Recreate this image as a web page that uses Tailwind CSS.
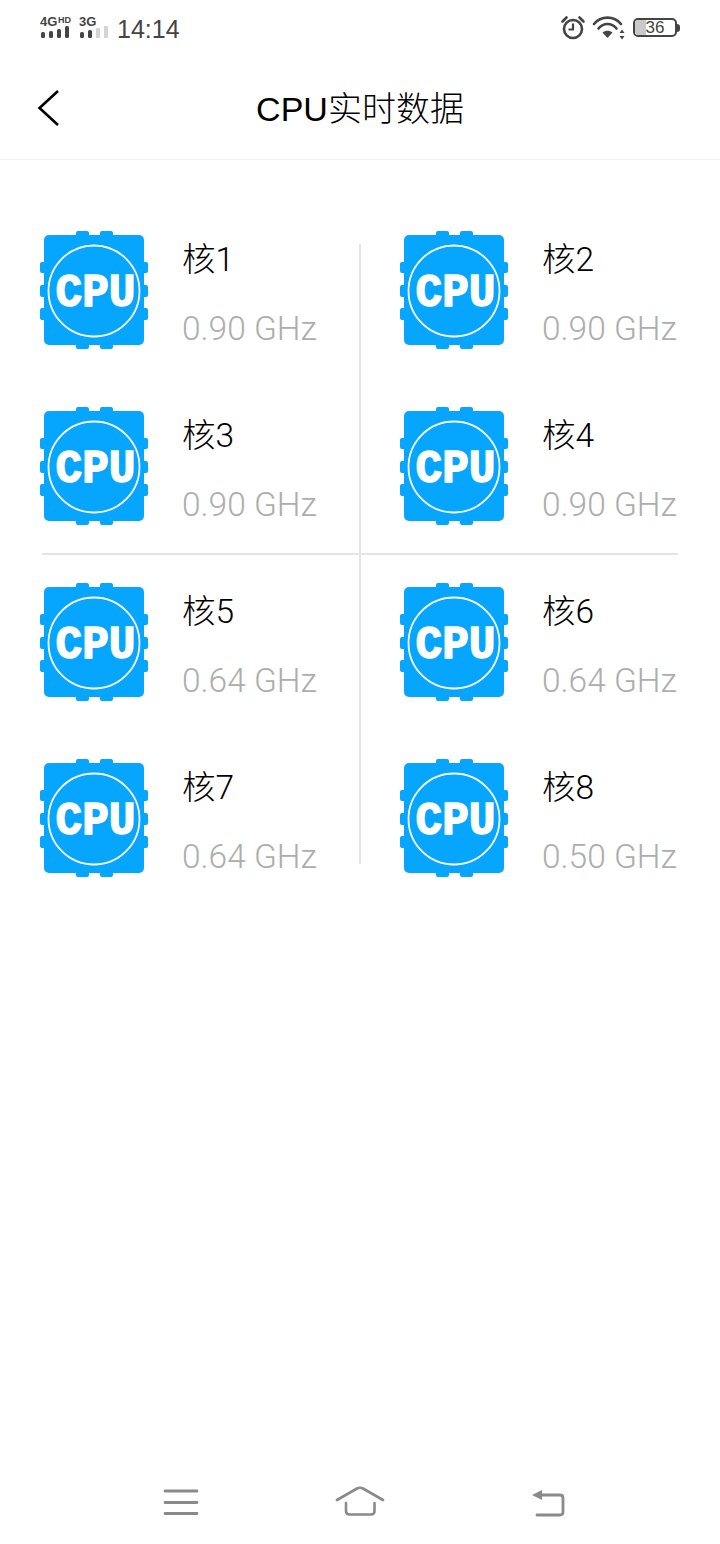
<!DOCTYPE html>
<html lang="zh-CN">

<head>
    <meta charset="UTF-8">
    <meta name="viewport" content="width=device-width, initial-scale=1.0">
    <title>CPU实时数据</title>
    <script src="https://cdn.jsdelivr.net/npm/@tailwindcss/browser@4"></script>
</head>

<body class="bg-white font-['Liberation_Sans','Noto_Sans_CJK_SC',sans-serif]">
    <div class="flex flex-col h-[1544px] w-[720px] overflow-hidden">
        <!-- Status bar -->
        <div class="h-[60px] flex justify-between items-center pl-10 pr-10">
            <div class="flex items-center">
                <svg width="72" height="28" viewBox="0 0 72 28" class="mr-[5px] mt-[-4px]">
                    <text x="0" y="12" font-size="13" font-weight="700" fill="#444" font-family="Liberation Sans">4G</text>
                    <text x="18" y="9" font-size="9" font-weight="700" fill="#444" font-family="Liberation Sans">HD</text>
                    <text x="39" y="12" font-size="13" font-weight="700" fill="#444" font-family="Liberation Sans">3G</text>
                    <g fill="#444">
                        <rect x="1" y="18" width="4" height="6" rx="1.5" />
                        <rect x="9" y="17" width="4" height="7" rx="1.5" />
                        <rect x="17" y="15" width="4" height="9" rx="1.5" />
                        <rect x="25" y="12" width="4" height="12" rx="1.5" />
                        <rect x="40" y="18" width="4" height="6" rx="1.5" />
                        <rect x="48" y="16" width="4" height="8" rx="1.5" />
                    </g>
                    <g fill="#d4d4d4">
                        <rect x="56" y="14" width="4" height="10" rx="1" />
                        <rect x="64" y="12" width="4" height="12" rx="1" />
                    </g>
                </svg>
                <span class="text-[25px] leading-none text-[#444] mt-[-2px]">14:14</span>
            </div>
            <div class="flex items-center gap-[7px]">
                <svg width="26" height="26" viewBox="0 0 26 26" fill="none" stroke="#444" stroke-width="2.6" class="mt-[-7px] mr-[-1px]">
                    <circle cx="13" cy="15" r="9" />
                    <path d="M13 9.500V15.500H8.500" stroke-width="2.2" />
                    <path d="M2.500 7.500 6.500 3.500M23.500 7.500 19.500 3.500" stroke-linecap="round" />
                </svg>
                <svg width="34" height="24" viewBox="0 0 34 24" fill="none" stroke="#444" stroke-width="2.6" stroke-linecap="round" class="mt-[-5px]">
                    <path d="M2 8C9-.5 22-.5 29 8" />
                    <path d="M6.500 12.500C11.500 6.500 19.500 6.500 24.500 12.500" />
                    <path d="M15.500 22 10.500 16.500C13.500 14 17.500 14 20.500 16.500Z" fill="#444" stroke="none" />
                    <path d="M30 13.500 32.500 17H27.500ZM30 23.500 32.500 20H27.500Z" fill="#444" stroke="none" />
                </svg>
                <div class="flex items-center mt-[-5px]">
                    <div class="relative w-[44px] h-[19px] rounded-[5px] border-2 border-[#444] overflow-hidden flex items-center justify-center">
                        <div class="absolute left-0 top-0 bottom-0 w-[11px] bg-[#c9c9c9]"></div>
                        <span class="relative text-[17px] leading-none text-[#444]">36</span>
                    </div>
                    <div class="w-[3px] h-[8px] bg-[#444] rounded-r-sm"></div>
                </div>
            </div>
        </div>

        <!-- Title bar -->
        <div class="relative h-[100px] pb-[2px] flex items-center justify-center border-b border-[#f2f2f2] shrink-0">
            <svg width="24" height="38" viewBox="0 0 24 38" fill="none" stroke="#000" stroke-width="2.6" class="absolute left-[37px] top-[29px]">
                <path d="M21 2 2.500 19 21 36" />
            </svg>
            <h1 class="text-[34px] leading-none text-black font-light">CPU实时数据</h1>
        </div>

        <!-- Cores -->
        <main class="relative mt-[42px]">
            <div id="coreGrid" class="grid grid-cols-2"></div>
            <div class="absolute left-[359px] top-[42px] bottom-[42px] w-[2px] bg-[#e4e4e4]"></div>
            <div class="absolute left-[42px] right-[42px] top-[351px] h-[2px] bg-[#e4e4e4]"></div>
        </main>

        <!-- Navigation bar -->
        <div class="mt-auto mb-[22px] h-[40px] flex items-center pl-[163px]">
            <svg width="36" height="30" viewBox="0 0 36 30" fill="none" stroke="#8a8a8a" stroke-width="2.8" stroke-linecap="round" class="mr-[136px]">
                <path d="M2 4H34M2 15.500H34M2 26.500H34" />
            </svg>
            <svg width="50" height="32" viewBox="0 0 50 32" fill="none" stroke="#8a8a8a" stroke-width="2.6" stroke-linecap="round" stroke-linejoin="round" class="mr-[146px]">
                <path d="M2 14 22 2.500Q25 1 28 2.500L48 14" />
                <path d="M11 17V25Q11 28.500 14.500 28.500H36Q39.500 28.500 39.500 25V17" />
            </svg>
            <svg width="36" height="30" viewBox="0 0 36 30" fill="none" stroke="#8a8a8a" stroke-width="2.8" stroke-linecap="round" stroke-linejoin="round">
                <path d="M8 8H29Q32 8 32 11V25Q32 28 29 28H6" />
                <path d="M1 8 11 3V13Z" fill="#8a8a8a" stroke="none" />
            </svg>
        </div>
    </div>

    <script>
        const cores = ["0.90", "0.90", "0.90", "0.90", "0.64", "0.64", "0.64", "0.50"];

        const chipIcon = `
            <svg width="108" height="118" viewBox="0 0 108 118" class="shrink-0">
                <g fill="#06a6ff">
                    <rect x="36" y="0" width="13" height="10" rx="2" />
                    <rect x="60" y="0" width="13" height="10" rx="2" />
                    <rect x="36" y="108" width="13" height="10" rx="2" />
                    <rect x="60" y="108" width="13" height="10" rx="2" />
                    <rect x="0" y="31" width="108" height="11" rx="2" />
                    <rect x="0" y="54" width="108" height="12" rx="2" />
                    <rect x="0" y="77" width="108" height="12" rx="2" />
                    <rect x="4" y="4" width="100" height="110" rx="5" />
                </g>
                <circle cx="54" cy="60" r="45.500" fill="none" stroke="#fff" stroke-width="1.800" />
                <text x="15.500" y="75" font-family="Liberation Mono" font-weight="700" font-size="46" fill="#fff" stroke="#fff" stroke-width="1.500"
                    textLength="80" lengthAdjust="spacingAndGlyphs">CPU</text>
            </svg>`;

        function renderCores() {
            const coreGrid = document.getElementById("coreGrid");
            cores.forEach((ghz, i) => {
                const div = document.createElement("div");
                div.className = "h-[176px] flex items-center pl-10";
                div.innerHTML = `${chipIcon}
                    <div class="ml-[34px] flex flex-col gap-[33px] mt-[9px] font-light font-['Roboto','Noto_Sans_CJK_SC',sans-serif]">
                        <p class="text-[33.500px] leading-[36px] text-black">核${i + 1}</p>
                        <p class="text-[33.500px] leading-[36px] text-[#adadad]">${ghz} GHz</p>
                    </div>`;
                coreGrid.appendChild(div);
            });
        }

        renderCores();
    </script>
</body>

</html>
